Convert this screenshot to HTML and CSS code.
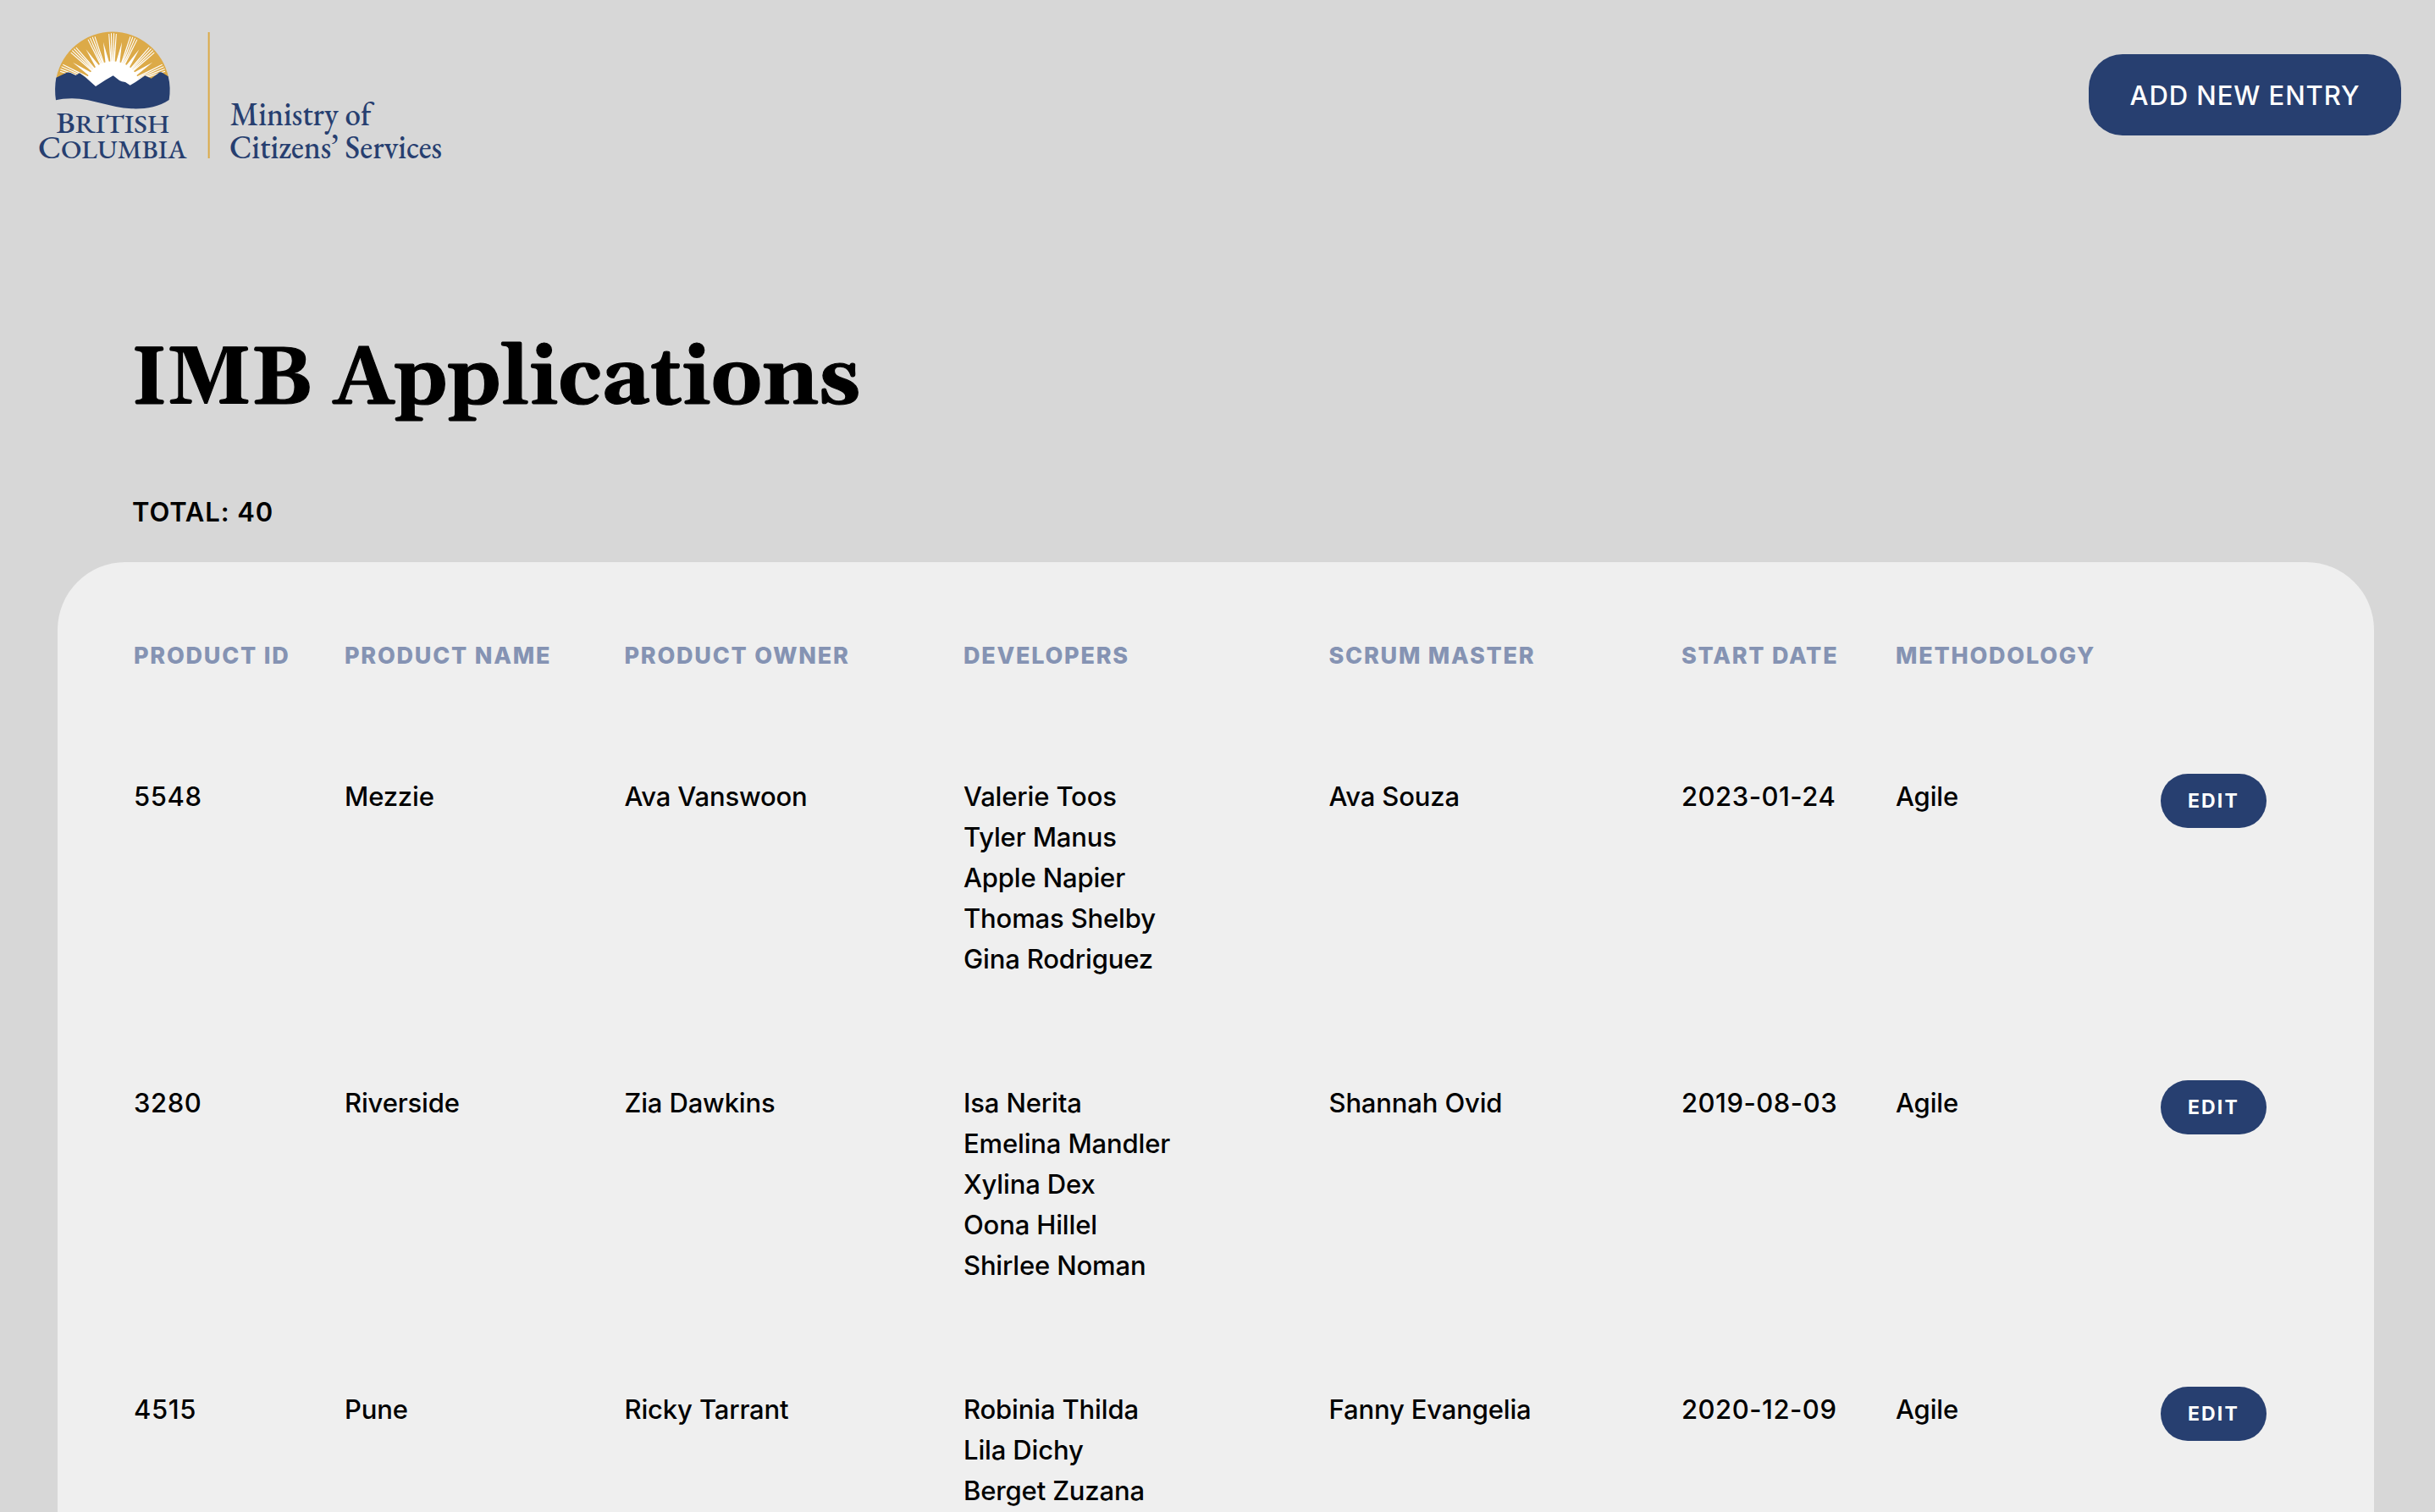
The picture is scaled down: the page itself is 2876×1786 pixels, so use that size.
FILE: index.html
```html
<!DOCTYPE html>
<html lang="en">
<head>
<meta charset="utf-8">
<title>IMB Applications</title>
<link rel="stylesheet" href="styles.css">
</head>
<body>
<header class="topbar">
  <svg class="logo" viewBox="0 0 1530 540" role="img" aria-label="British Columbia Ministry of Citizens' Services">
    <defs>
      <g id="rays">
        <path d="M-14.500 -196L-11.500 -196L-3.500 -96L-8 -96Z"/>
        <path d="M-6 -198L-3 -198L0 -96L-4.500 -96Z"/>
        <path d="M3 -198L6 -198L4.500 -96L0 -96Z"/>
        <path d="M11.500 -196L14.500 -196L8 -96L3.500 -96Z"/>
      </g>
      <path id="spike" d="M0 -170L7 -92L-7 -92Z"/>
    </defs>
    <path class="gold" d="M110 214A202.800 202.800 0 0 1 507 214L480 240H140Z"/>
    <g class="white" transform="translate(309 256)">
      <path d="M-99 0A99 99 0 0 1 99 0Z"/>
      <use href="#rays"/>
      <use href="#rays" transform="rotate(22.500)"/>
      <use href="#rays" transform="rotate(45)"/>
      <use href="#rays" transform="rotate(67.500)"/>
      <use href="#rays" transform="rotate(-22.500)"/>
      <use href="#rays" transform="rotate(-45)"/>
      <use href="#rays" transform="rotate(-67.500)"/>
      <use href="#spike" transform="rotate(11.250)"/>
      <use href="#spike" transform="rotate(33.750)"/>
      <use href="#spike" transform="rotate(56.250)"/>
      <use href="#spike" transform="rotate(-11.250)"/>
      <use href="#spike" transform="rotate(-33.750)"/>
      <use href="#spike" transform="rotate(-56.250)"/>
    </g>
    <path class="navy" d="M109 215L143 199Q152 194 160 198L178 207L192 199L212 213L249 246L285 223L311 208L333 225Q340 230 354 231L371 242L390 231L424 208L446 218L470 200Q479 192 487 199L506 211Q516 250 509 294C470 321 420 327 375 325C300 322 240 290 165 289Q130 289 108 295Q102 255 109 215Z"/>
    <rect class="gold" x="647" y="54" width="6" height="447"/>
    <g class="navy logo-text">
      <text x="109" y="412" font-size="107" textLength="402" lengthAdjust="spacingAndGlyphs">B<tspan font-size="94">RITISH</tspan></text>
      <text x="45" y="500" font-size="112" textLength="526" lengthAdjust="spacingAndGlyphs">C<tspan font-size="94">OLUMBIA</tspan></text>
      <text x="725" y="384" font-size="118" textLength="500" lengthAdjust="spacingAndGlyphs">Ministry of</text>
      <text x="723" y="501" font-size="118" textLength="753" lengthAdjust="spacingAndGlyphs">Citizens’ Services</text>
    </g>
  </svg>
  <button class="btn btn-add">ADD NEW ENTRY</button>
</header>
<main>
  <h1 class="title">IMB Applications</h1>
  <p class="total">TOTAL: 40</p>
  <section class="card">
    <div class="row head">
      <span>PRODUCT ID</span><span>PRODUCT NAME</span><span>PRODUCT OWNER</span><span>DEVELOPERS</span><span>SCRUM MASTER</span><span>START DATE</span><span>METHODOLOGY</span>
    </div>
    <div class="row item">
      <span class="id">5548</span><span>Mezzie</span><span>Ava Vanswoon</span>
      <span>Valerie Toos<br>Tyler Manus<br>Apple Napier<br>Thomas Shelby<br>Gina Rodriguez</span>
      <span>Ava Souza</span><span class="date">2023-01-24</span><span>Agile</span><button class="btn btn-edit">EDIT</button>
    </div>
    <div class="row item">
      <span class="id">3280</span><span>Riverside</span><span>Zia Dawkins</span>
      <span>Isa Nerita<br>Emelina Mandler<br>Xylina Dex<br>Oona Hillel<br>Shirlee Noman</span>
      <span>Shannah Ovid</span><span class="date">2019-08-03</span><span>Agile</span><button class="btn btn-edit">EDIT</button>
    </div>
    <div class="row item">
      <span class="id">4515</span><span>Pune</span><span>Ricky Tarrant</span>
      <span>Robinia Thilda<br>Lila Dichy<br>Berget Zuzana</span>
      <span>Fanny Evangelia</span><span class="date">2020-12-09</span><span>Agile</span><button class="btn btn-edit">EDIT</button>
    </div>
  </section>
</main>
</body>
</html>
```
FILE: styles.css
```css
* { box-sizing: border-box; }
body {
  margin: 0;
  height: 1786px;
  overflow: hidden;
  background: #d7d7d7;
  color: #000;
  font: 500 31px/48px Inter, "Liberation Sans", sans-serif;
}
.topbar {
  display: flex;
  justify-content: space-between;
  align-items: flex-start;
  height: 224px;
  padding: 20px 40px 0 30px;
}
.logo { width: 510px; height: 180px; }
.logo-text {
  font-family: "EB Garamond", "Liberation Serif", serif;
  font-weight: 500;
  font-variant-ligatures: no-contextual;
}
.gold { fill: #dcaa48; }
.white { fill: #fff; }
.navy { fill: #273f70; }
.btn {
  border: 0;
  background: #273f70;
  color: #fff;
  font-family: inherit;
  white-space: nowrap;
}
.btn-add {
  width: 369px;
  height: 96px;
  margin-top: 44px;
  padding: 0;
  border-radius: 40px;
  font-size: 31px;
  font-weight: 550;
  letter-spacing: 0.95px;
}
.title {
  margin: 0;
  padding: 160px 0 0 155px;
  font: 700 96px/130px Gelasio, Georgia, "Liberation Serif", serif;
  -webkit-text-stroke: 1.2px #000;
}
.total {
  margin: 67px 0 35px;
  padding-left: 156px;
  font-weight: 600;
  letter-spacing: 0.9px;
}
.card {
  width: 2736px;
  height: 1122px;
  margin-left: 68px;
  padding: 90px 90px 0;
  border-radius: 80px 80px 0 0;
  background: #efefef;
  overflow: hidden;
}
.row {
  display: grid;
  grid-template-columns: 249px 330.5px 400.5px 431.5px 416.5px 253px 313px 125px;
  align-items: start;
}
.head {
  margin-bottom: 60px;
  color: #8593b3;
  font-size: 27px;
  font-weight: 800;
  line-height: 42px;
  letter-spacing: 1.75px;
}
.item {
  padding: 61px 0;
  letter-spacing: -0.15px;
}
.id { letter-spacing: 0.6px; }
.date { letter-spacing: 0.5px; }
.btn-edit {
  width: 125px;
  height: 64px;
  margin-top: -3px;
  padding: 0;
  border-radius: 32px;
  font-size: 23px;
  font-weight: 700;
  letter-spacing: 2.2px;
}
```
